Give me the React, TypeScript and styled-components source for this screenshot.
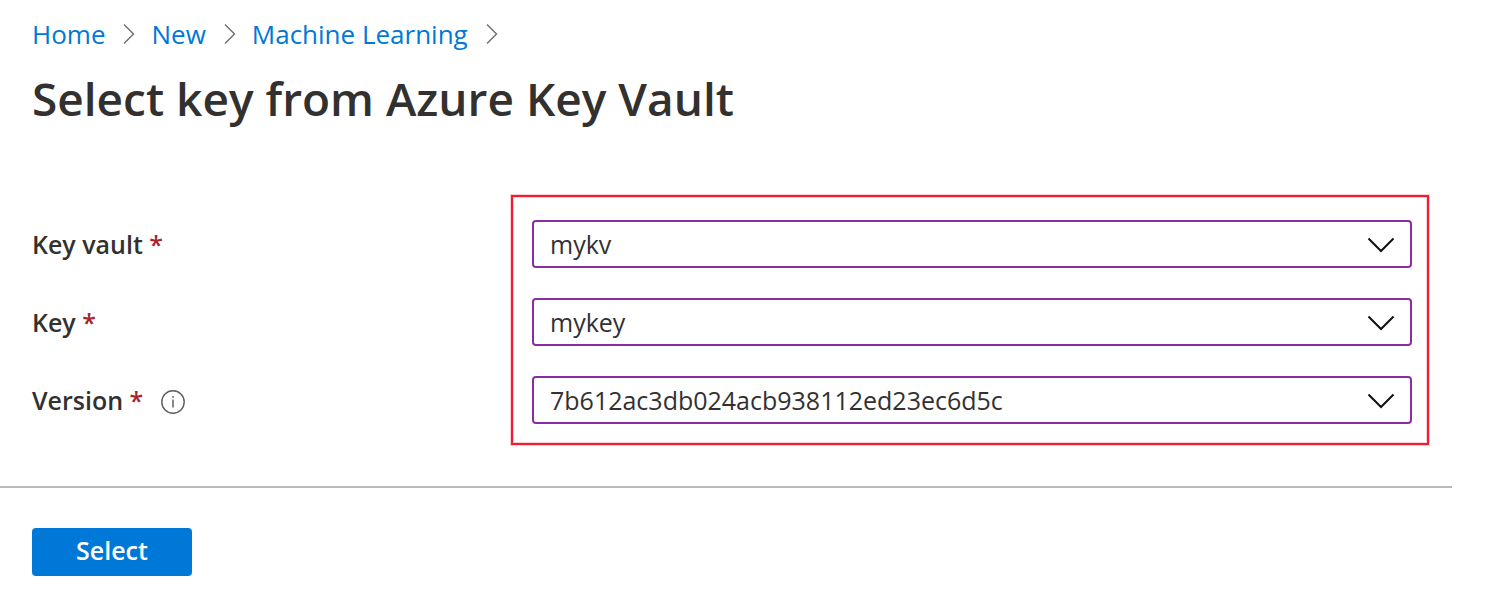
import React from "react";
import styled, { createGlobalStyle } from "styled-components";

const GlobalStyle = createGlobalStyle`
  *, *::before, *::after { box-sizing: border-box; }
  body {
    margin: 0;
    background: #ffffff;
    color: #323130;
    font-family: "Segoe UI", "Open Sans", "Noto Sans", sans-serif;
  }
`;

const Page = styled.main`
  padding: 16px 0 32px;
`;

const Breadcrumb = styled.ol`
  display: flex;
  align-items: center;
  margin: 0;
  padding: 0 32px;
  list-style: none;
  font-size: 26px;
  line-height: 36px;
`;

const Crumb = styled.li`
  display: flex;
  align-items: center;
`;

const CrumbLink = styled.a`
  color: #0078d7;
  text-decoration: none;
  &:hover { text-decoration: underline; }
`;

const Separator = styled.svg`
  width: 12px;
  height: 20px;
  margin: 0 16px 0 18px;
  fill: none;
  stroke: #6e6d6c;
`;

const Title = styled.h1`
  margin: 14px 0 0;
  padding: 0 32px;
  font-size: 46px;
  font-weight: 600;
  line-height: 64px;
`;

const Form = styled.form`
  margin: 0;
`;

const Fields = styled.div`
  display: grid;
  grid-template-columns: 479px 1fr;
  margin-top: 65px;
  padding: 0 81px 0 32px;
`;

const Labels = styled.div`
  display: flex;
  flex-direction: column;
  gap: 30px;
  padding-top: 25px;
`;

const LabelRow = styled.div`
  display: flex;
  align-items: center;
  gap: 18px;
  height: 48px;
`;

const Label = styled.label`
  font-size: 25px;
  font-weight: 600;
  line-height: 32px;
`;

const Required = styled.span`
  color: #a4262c;
`;

const InfoIcon = styled.svg`
  width: 24px;
  height: 24px;
  margin-top: 4px;
  fill: none;
  stroke: #605e5c;
`;

const Highlight = styled.div`
  display: flex;
  flex-direction: column;
  gap: 30px;
  padding: 23px 15px 19px 19px;
  border: 2px solid #f01c38;
  box-shadow: 0 0 0 1px #fbd0d4, inset 0 0 0 1px #fbd0d4;
`;

const SelectBox = styled.div`
  display: grid;
  align-items: center;
  height: 48px;
  > * { grid-area: 1 / 1; }
`;

const Select = styled.select`
  appearance: none;
  width: 100%;
  height: 48px;
  padding: 0 56px 0 16px;
  border: 2px solid #8a2da5;
  border-radius: 4px;
  background: #ffffff;
  color: #323130;
  font-family: inherit;
  font-size: 25px;
  line-height: 32px;
`;

const Chevron = styled.svg`
  justify-self: end;
  width: 28px;
  height: 16px;
  margin: 2px 17px 0 0;
  fill: none;
  stroke: #111111;
  stroke-width: 2;
  pointer-events: none;
`;

const Divider = styled.hr`
  height: 2px;
  margin: 41px 58px 0 0;
  border: 0;
  background: #bababa;
`;

const Footer = styled.div`
  padding: 40px 32px 0;
`;

const PrimaryButton = styled.button`
  display: block;
  width: 160px;
  height: 48px;
  padding: 0 0 4px;
  border: 0;
  border-radius: 4px;
  background: #0078d7;
  color: #ffffff;
  font-family: inherit;
  font-size: 25px;
  font-weight: 600;
  line-height: 32px;
  cursor: pointer;
`;

const crumbs = ["Home", "New", "Machine Learning"];

const fields = [
  { id: "key-vault", label: "Key vault", value: "mykv", info: false },
  { id: "key", label: "Key", value: "mykey", info: false },
  { id: "version", label: "Version", value: "7b612ac3db024acb938112ed23ec6d5c", info: true },
];

export default function App() {
  return (
    <Page>
      <GlobalStyle />
      <nav aria-label="Breadcrumb">
        <Breadcrumb>
          {crumbs.map((name) => (
            <Crumb key={name}>
              <CrumbLink href="#">{name}</CrumbLink>
              <Separator viewBox="0 0 12 20" strokeWidth="1.4" aria-hidden="true">
                <path d="M1 0.5 L10.5 10 L1 19.5" />
              </Separator>
            </Crumb>
          ))}
        </Breadcrumb>
      </nav>
      <Title>Select key from Azure Key Vault</Title>
      <Form onSubmit={(event) => event.preventDefault()}>
        <Fields>
          <Labels>
            {fields.map((field) => (
              <LabelRow key={field.id}>
                <Label htmlFor={field.id}>
                  {field.label} <Required>*</Required>
                </Label>
                {field.info && (
                  <InfoIcon viewBox="0 0 24 24" role="img" aria-label="Information">
                    <circle cx="12" cy="12" r="11.2" strokeWidth="1.4" />
                    <path d="M12 9.5 V17.5" strokeWidth="1.5" />
                    <path d="M12 6 V7.7" strokeWidth="1.5" />
                  </InfoIcon>
                )}
              </LabelRow>
            ))}
          </Labels>
          <Highlight>
            {fields.map((field) => (
              <SelectBox key={field.id}>
                <Select id={field.id} defaultValue={field.value} required>
                  <option>{field.value}</option>
                </Select>
                <Chevron viewBox="0 0 28 16" aria-hidden="true">
                  <path d="M1.5 1.5 L14 14 L26.5 1.5" />
                </Chevron>
              </SelectBox>
            ))}
          </Highlight>
        </Fields>
        <Divider />
        <Footer>
          <PrimaryButton type="submit">Select</PrimaryButton>
        </Footer>
      </Form>
    </Page>
  );
}
